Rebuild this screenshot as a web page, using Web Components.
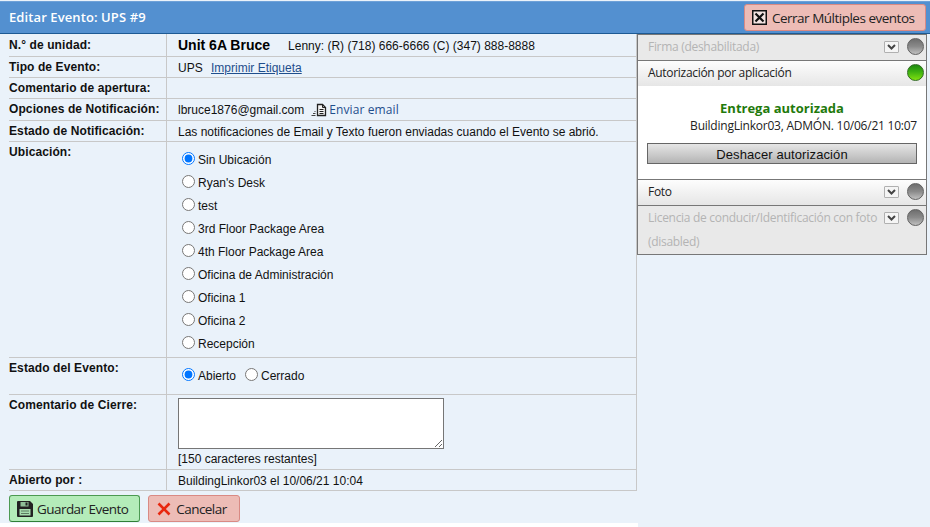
<!DOCTYPE html>
<html lang="es">
<head>
<meta charset="utf-8">
<title>Editar Evento</title>
<style>
  html, body { margin: 0; padding: 0; background: #eaf2fa; }
  body { font-family: "Liberation Sans", Arial, sans-serif; font-size: 12px; color: #111; }
</style>
</head>
<body>
<event-page>
  <title-bar slot="top" heading="Editar Evento: UPS #9"></title-bar>

  <form-row slot="form" label="N.° de unidad:" rowheight="22" first>
    <span class="unit-line"><b style="font-size:14px;color:#000">Unit 6A Bruce</b><span style="margin-left:18px">Lenny: (R) (718) 666-6666 (C) (347) 888-8888</span></span>
  </form-row>
  <form-row slot="form" label="Tipo de Evento:" rowheight="20">
    UPS <a href="#" style="color:#1f4e8c;margin-left:5px">Imprimir Etiqueta</a>
  </form-row>
  <form-row slot="form" label="Comentario de apertura:" rowheight="20"></form-row>
  <form-row slot="form" label="Opciones de Notificación:" rowheight="21">
    <span style="display:flex;align-items:center">lbruce1876@gmail.com
      <svg width="16" height="14" viewBox="0 0 16 14" style="margin:0 2px 0 7px" fill="none" stroke="#222">
        <path d="M6.500 1.500h5l3 3v8h-8z" fill="#f4f4f4" stroke-width="1.300"/>
        <path d="M11.500 1.500v3h3M8.500 6.500h4M8.500 8.500h4M8.500 10.500h4"/>
        <path d="M0.500 12.500h4M2 10.500h2.500M3.500 8.500h1" stroke="#444"/>
      </svg>
      <a href="#" style="color:#1f4e8c;text-decoration:none;font-family:'Open Sans',sans-serif;font-size:12px;letter-spacing:0.100px">Enviar email</a>
    </span>
  </form-row>
  <form-row slot="form" label="Estado de Notificación:" rowheight="20">Las notificaciones de Email y Texto fueron enviadas cuando el Evento se abrió.</form-row>
  <form-row slot="form" label="Ubicación:" rowheight="215">
    <radio-list name="ubicacion" checked="Sin Ubicación" options="Sin Ubicación|Ryan's Desk|test|3rd Floor Package Area|4th Floor Package Area|Oficina de Administración|Oficina 1|Oficina 2|Recepción"></radio-list>
  </form-row>
  <form-row slot="form" label="Estado del Evento:" rowheight="36">
    <radio-list name="estado" inline checked="Abierto" options="Abierto|Cerrado"></radio-list>
  </form-row>
  <form-row slot="form" label="Comentario de Cierre:" rowheight="74">
    <closing-comment></closing-comment>
  </form-row>
  <form-row slot="form" label="Abierto por :" rowheight="20">BuildingLinkor03 el 10/06/21 10:04</form-row>

  <action-button slot="actions" tone="green" icon="save">Guardar Evento</action-button>
  <action-button slot="actions" tone="red" icon="cross">Cancelar</action-button>

  <side-section slot="side" disabled led="off" chevron heading="Firma (deshabilitada)"></side-section>
  <side-section slot="side" led="on" heading="Autorización por aplicación">
    <div style="text-align:center;padding:14px 9px 15px">
      <div style="font:700 13px/17px 'Open Sans',sans-serif;color:#1f7a0c">Entrega autorizada</div>
      <div style="font:12px/18px 'Open Sans',sans-serif;letter-spacing:-0.230px;color:#222;text-align:right;white-space:nowrap">BuildingLinkor03, ADMÓN. 10/06/21 10:07</div>
      <div style="margin-top:8px;height:19px;border:1px solid #666;background:linear-gradient(#e6e6e6,#b4b4b4);font:13px/21px 'Liberation Sans',sans-serif;letter-spacing:0.100px;color:#111">Deshacer autorización</div>
    </div>
  </side-section>
  <side-section slot="side" led="off" chevron heading="Foto"></side-section>
  <side-section slot="side" disabled led="off" chevron heading="Licencia de conducir/Identificación con foto (disabled)"></side-section>
</event-page>

<script>
class EventPage extends HTMLElement {
  constructor() {
    super();
    this.attachShadow({ mode: "open" });
  }

  connectedCallback() {
    this.shadowRoot.innerHTML = `
      <style>
        :host { display: block; width: 930px; height: 527px; overflow: hidden; }
        .main { display: flex; align-items: flex-start; }
        .left { width: 638px; height: 489px; box-sizing: border-box; padding-left: 9px; background: #eaf2fa; box-shadow: 0 4px 0 #fff; }
        .form { width: 628px; }
        .actions { display: flex; gap: 8px; padding-top: 4px; }
        .side { width: 290px; margin-left: -1px; box-sizing: border-box; border: 1px solid #777; border-top: none; background: #fff; }
      </style>
      <slot name="top"></slot>
      <div class="main">
        <div class="left">
          <div class="form"><slot name="form"></slot></div>
          <div class="actions"><slot name="actions"></slot></div>
        </div>
        <div class="side"><slot name="side"></slot></div>
      </div>
    `;
  }
}

class TitleBar extends HTMLElement {
  constructor() {
    super();
    this.attachShadow({ mode: "open" });
  }

  connectedCallback() {
    const heading = this.getAttribute("heading") || "";
    this.shadowRoot.innerHTML = `
      <style>
        :host { display: block; }
        .bar {
          height: 31px; margin-top: 1px; padding: 0 4px 0 9px;
          display: flex; align-items: center; justify-content: space-between;
          background: #5390d0; border-bottom: 1px solid #1d5a94;
          border-top: 1px solid #6ea1d8;
        }
        h1 { margin: 0 0 2px; font: 600 13px "Open Sans", sans-serif; letter-spacing: 0.100px; color: #fff; }
        .close {
          height: 27px; width: 182px; box-sizing: border-box;
          display: flex; align-items: center; gap: 5px; padding-left: 7px;
          background: #edbcb6; border: 1px solid #d98a84; border-radius: 3px;
          font: 13.500px "Open Sans", sans-serif; color: #222; white-space: nowrap;
          letter-spacing: -0.500px;
        }
        svg { flex: none; }
      </style>
      <div class="bar">
        <h1>${heading}</h1>
        <div class="close">
          <svg width="15" height="15" viewBox="0 0 15 15" fill="none" stroke="#111">
            <rect x="0.750" y="0.750" width="13.500" height="13.500" fill="#f3e4e2" stroke-width="1.500"/>
            <path d="M3.500 3.500l8 8M11.500 3.500l-8 8" stroke-width="2.200"/>
          </svg>
          Cerrar Múltiples eventos
        </div>
      </div>
    `;
  }
}

class FormRow extends HTMLElement {
  constructor() {
    super();
    this.attachShadow({ mode: "open" });
  }

  connectedCallback() {
    const label = this.getAttribute("label") || "";
    const height = this.getAttribute("rowheight") || "20";
    const labelTop = this.hasAttribute("first") ? 4 : 3;
    this.shadowRoot.innerHTML = `
      <style>
        :host { display: block; }
        .row {
          display: grid; grid-template-columns: 158px 1fr;
          height: ${height}px;
          border-bottom: 1px solid #c8c8c8; border-right: 1px solid #c8c8c8;
          font: 12px/14px "Liberation Sans", Arial, sans-serif; color: #111;
        }
        .label { font-weight: 700; padding-top: ${labelTop}px; border-right: 1px solid #c8c8c8; letter-spacing: 0.100px; }
        .value { padding: 4px 0 0 11px; }
      </style>
      <div class="row">
        <div class="label">${label}</div>
        <div class="value"><slot></slot></div>
      </div>
    `;
  }
}

class RadioList extends HTMLElement {
  constructor() {
    super();
    this.attachShadow({ mode: "open" });
  }

  connectedCallback() {
    const name = this.getAttribute("name");
    const checked = this.getAttribute("checked");
    const inline = this.hasAttribute("inline");
    const options = this.getAttribute("options").split("|");
    const items = options.map((option) => `
      <label>
        <input type="radio" name="${name}" ${option === checked ? "checked" : ""}>${option}
      </label>
    `).join("");
    this.shadowRoot.innerHTML = `
      <style>
        :host { display: block; padding: 2px 0 0 4px; }
        .list { display: ${inline ? "flex" : "block"}; gap: 9px; }
        label { display: ${inline ? "inline-flex" : "flex"}; align-items: center; height: 23px; font: 12px "Liberation Sans", Arial, sans-serif; color: #111; }
        input { margin: 0 3px 2px 0; width: 13px; height: 13px; }
      </style>
      <div class="list">${items}</div>
    `;
  }
}

class ClosingComment extends HTMLElement {
  constructor() {
    super();
    this.attachShadow({ mode: "open" });
  }

  connectedCallback() {
    this.shadowRoot.innerHTML = `
      <style>
        :host { display: block; margin-top: -1px; }
        textarea { display: block; width: 266px; height: 51px; box-sizing: border-box; margin: 0 0 3px; border: 1px solid #767676; background: #fff; }
        span { font: 12px/14px "Liberation Sans", Arial, sans-serif; color: #111; }
      </style>
      <textarea></textarea>
      <span>[150 caracteres restantes]</span>
    `;
  }
}

const BUTTON_ICONS = {
  save: `<svg width="16" height="16" viewBox="0 0 16 16">
    <path d="M1 0h12l3 3v12a1 1 0 0 1-1 1H1a1 1 0 0 1-1-1V1a1 1 0 0 1 1-1z" fill="#222"/>
    <rect x="3.500" y="1" width="8" height="4.500" fill="#8fbf98"/>
    <rect x="8.500" y="1.500" width="2" height="3" fill="#222"/>
    <rect x="2.500" y="8" width="11" height="6.500" fill="#a6dcae"/>
    <path d="M4 10h8M4 12.500h8" stroke="#5c7c62"/>
  </svg>`,
  cross: `<svg width="14" height="14" viewBox="0 0 14 14">
    <path d="M1.500 1.500l11 11M12.500 1.500l-11 11" stroke="#e8270f" stroke-width="2.600" fill="none"/>
  </svg>`,
};

class ActionButton extends HTMLElement {
  constructor() {
    super();
    this.attachShadow({ mode: "open" });
  }

  connectedCallback() {
    const tone = this.getAttribute("tone");
    const icon = BUTTON_ICONS[this.getAttribute("icon")];
    const colors = tone === "green"
      ? "background:#b4ecb9;border-color:#4c9a52;border-bottom-color:#2f7f36;padding:0 11px 0 7px;gap:4px"
      : "background:#edbcb6;border-color:#d98a84;padding:0 12px 0 8px;gap:5px";
    this.shadowRoot.innerHTML = `
      <style>
        :host { display: block; }
        .btn {
          height: 27px; box-sizing: border-box;
          display: flex; align-items: center;
          border: 1px solid; border-radius: 3px;
          font: 13.500px "Open Sans", sans-serif; color: #222; letter-spacing: -0.550px;
        }
      </style>
      <div class="btn" style="${colors}">${icon}<slot></slot></div>
    `;
  }
}

class SideSection extends HTMLElement {
  constructor() {
    super();
    this.attachShadow({ mode: "open" });
  }

  connectedCallback() {
    const heading = this.getAttribute("heading") || "";
    const disabled = this.hasAttribute("disabled");
    const lit = this.getAttribute("led") === "on";
    const chevron = this.hasAttribute("chevron");
    this.shadowRoot.innerHTML = `
      <style>
        :host { display: block; border-top: 1px solid #777; }
        .head {
          display: grid; grid-template-columns: 1fr 20px 25px;
          padding: 0 2px 0 10px; min-height: 25px; align-items: start;
          background: ${disabled ? "#e9e9e9" : "linear-gradient(#fdfdfd,#e6e6e6)"};
          font: 12px/24px "Open Sans", sans-serif; letter-spacing: -0.300px; color: ${disabled ? "#b4b4b4" : "#222"};
        }
        .chev { width: 15px; height: 12px; margin: 6px 0 0 5px; box-sizing: border-box; border: 1px solid #b0b0b0; border-radius: 1px; background: #f5f5f5; }
        .chev svg { display: block; }
        .led {
          width: 17px; height: 17px; box-sizing: border-box; margin: 3px 0 0 8px; border-radius: 50%;
          border: 1px solid ${lit ? "#2f6a20" : "#606060"};
          background: ${lit
            ? "linear-gradient(#1f8a10,#3cb010 45%,#80e010)"
            : "linear-gradient(#6e6e6e,#8a8a8a 50%,#c0c0c0)"};
        }
      </style>
      <div class="head">
        <span>${heading}</span>
        ${chevron
          ? `<span class="chev"><svg width="13" height="10" viewBox="0 0 13 10"><path d="M3 3l3.500 3.500L10 3" fill="none" stroke="#444" stroke-width="2"/></svg></span>`
          : "<span></span>"}
        <span class="led"></span>
      </div>
      <slot></slot>
    `;
  }
}

customElements.define("event-page", EventPage);
customElements.define("title-bar", TitleBar);
customElements.define("form-row", FormRow);
customElements.define("radio-list", RadioList);
customElements.define("closing-comment", ClosingComment);
customElements.define("action-button", ActionButton);
customElements.define("side-section", SideSection);
</script>
</body>
</html>
